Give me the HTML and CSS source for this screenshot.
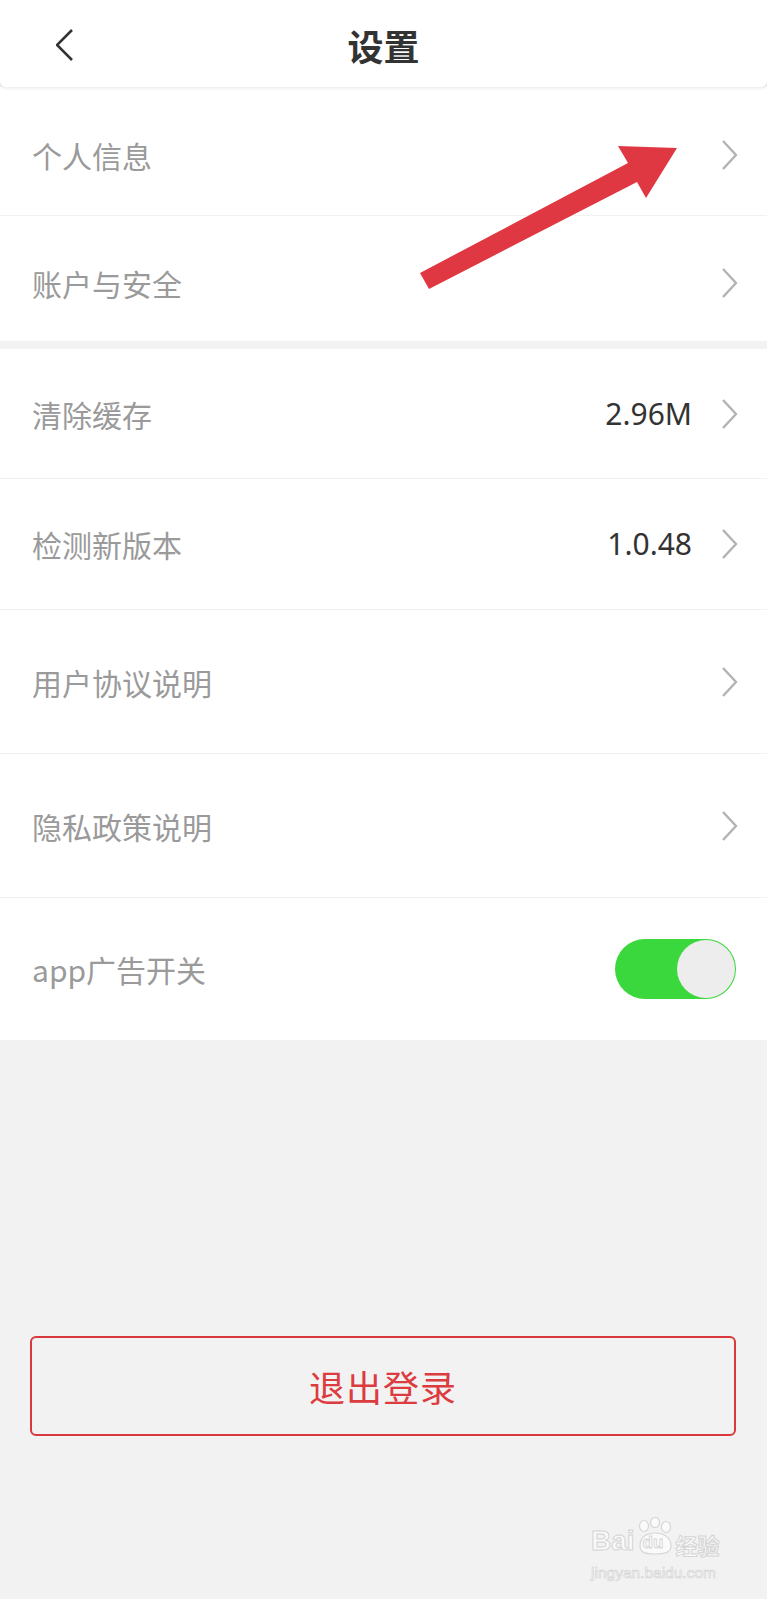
FILE: index.html
```html
<!DOCTYPE html>
<html lang="zh-CN">
<head>
<meta charset="utf-8">
<title>设置</title>
<link rel="stylesheet" href="styles.css">
</head>
<body>
<div class="page">
  <header class="header">
    <div class="back">
      <svg width="20" height="34" viewBox="0 0 20 34"><polyline points="16,2 1,17 16,32" fill="none" stroke="#333" stroke-width="2.6" stroke-linejoin="miter"/></svg>
    </div>
    <h1 class="title">设置</h1>
    <div></div>
  </header>

  <section class="group first">
    <div class="row h129 line"><span class="label">个人信息</span><span class="right"><svg class="chev" width="18" height="32" viewBox="0 0 18 32"><polyline points="2,2 15,16 2,30" fill="none" stroke="#b3b3b3" stroke-width="2.4"/></svg></span></div>
    <div class="row h125"><span class="label">账户与安全</span><span class="right"><svg class="chev" width="18" height="32" viewBox="0 0 18 32"><polyline points="2,2 15,16 2,30" fill="none" stroke="#b3b3b3" stroke-width="2.4"/></svg></span></div>
  </section>

  <section class="group second">
    <div class="row h130 line"><span class="label">清除缓存</span><span class="right"><span class="value">2.96M</span><svg class="chev" width="18" height="32" viewBox="0 0 18 32"><polyline points="2,2 15,16 2,30" fill="none" stroke="#b3b3b3" stroke-width="2.4"/></svg></span></div>
    <div class="row h131 line"><span class="label">检测新版本</span><span class="right"><span class="value">1.0.48</span><svg class="chev" width="18" height="32" viewBox="0 0 18 32"><polyline points="2,2 15,16 2,30" fill="none" stroke="#b3b3b3" stroke-width="2.4"/></svg></span></div>
    <div class="row h144 line"><span class="label">用户协议说明</span><span class="right"><svg class="chev" width="18" height="32" viewBox="0 0 18 32"><polyline points="2,2 15,16 2,30" fill="none" stroke="#b3b3b3" stroke-width="2.4"/></svg></span></div>
    <div class="row h144 line"><span class="label">隐私政策说明</span><span class="right"><svg class="chev" width="18" height="32" viewBox="0 0 18 32"><polyline points="2,2 15,16 2,30" fill="none" stroke="#b3b3b3" stroke-width="2.4"/></svg></span></div>
    <div class="row h142"><span class="label">app广告开关</span><span class="right"><span class="toggle"><span class="knob"></span></span></span></div>
  </section>

  <div class="logout-wrap">
    <button class="logout">退出登录</button>
  </div>

  <svg class="arrow" width="767" height="320" viewBox="0 0 767 320">
    <polygon points="420,273 628,163 618,146 677,148 646,198 637,182 429,289" fill="#e03842"/>
  </svg>

  <div class="watermark">
    <div class="wm-top"><span class="bai">Bai</span><span class="paw"><svg width="40" height="38" viewBox="0 0 40 38"><g fill="#fafafa" stroke="#d6d6d6" stroke-width="1.2"><ellipse cx="9" cy="9" rx="4.5" ry="5.5"/><ellipse cx="20" cy="5.5" rx="4.5" ry="5"/><ellipse cx="31" cy="10" rx="4.5" ry="5.5"/><path d="M5 29 C5 19 13 16 20 16 C28 16 36 20 36 29 C36 36 29 37 20 37 C11 37 5 36 5 29 Z"/></g></svg><span class="du">du</span></span><span class="jy">经验</span></div>
    <div class="wm-bottom">jingyan.baidu.com</div>
  </div>
</div>
</body>
</html>
```

FILE: styles.css
```css
* { box-sizing: border-box; }
html, body { margin: 0; padding: 0; }
body {
  background: #f2f2f2;
  font-family: "Noto Sans CJK SC", "Noto Sans", sans-serif;
}
.page {
  position: relative;
  width: 767px;
  min-height: 1599px;
  background: #f2f2f2;
}
.header {
  position: relative;
  z-index: 2;
  height: 87px;
  background: #fff;
  display: grid;
  grid-template-columns: 1fr auto 1fr;
  align-items: center;
  box-shadow: 0 2px 3px rgba(0,0,0,0.07);
  border-radius: 0 0 6px 6px;
}
.back {
  padding-left: 56px;
  display: flex;
  align-items: center;
  padding-top: 2px;
}
.title {
  margin: 0;
  font-size: 36px;
  font-weight: 700;
  color: #333;
  line-height: 1;
  padding-top: 2px;
}
.group {
  background: #fff;
  position: relative;
}
.group.second { margin-top: 8px; }
.row {
  display: flex;
  align-items: center;
  justify-content: space-between;
  padding: 0 30px 0 32px;
  position: relative;
}
.group.first .row { padding-top: 8px; }
.row.line { border-bottom: 1px solid #f1f1f1; }
.h125 { height: 125px; }
.h129 { height: 129px; }
.h130 { height: 130px; }
.h131 { height: 131px; }
.h142 { height: 142px; }
.h144 { height: 144px; }
.label {
  font-size: 30px;
  color: #9a9a9a;
  line-height: 1;
}
.right {
  display: flex;
  align-items: center;
}
.value {
  font-family: "Noto Sans", "Open Sans", sans-serif;
  font-size: 30px;
  color: #333;
  margin-right: 29px;
  line-height: 1;
}
.chev { display: block; margin-right: -2px; }
.toggle {
  width: 121px;
  height: 60px;
  border-radius: 30px;
  background: #3ad83c;
  display: flex;
  justify-content: flex-end;
  align-items: center;
  padding: 1px;
  margin-right: 1px;
}
.knob {
  width: 58px;
  height: 58px;
  border-radius: 50%;
  background: #ededed;
}
.logout-wrap {
  padding: 296px 31px 0 30px;
}
.logout {
  display: block;
  width: 100%;
  height: 100px;
  background: #f2f2f2;
  border: 2px solid #d9383c;
  border-radius: 6px;
  color: #dc3b3f;
  font-family: "Noto Sans CJK SC", sans-serif;
  font-size: 36px;
  letter-spacing: 1px;
  padding: 0;
}
.arrow {
  position: absolute;
  left: 0;
  top: 0;
  z-index: 3;
}
.watermark {
  position: absolute;
  left: 591px;
  top: 1514px;
  color: #fafafa;
  -webkit-text-stroke: 1px #d4d4d4;
  font-family: "Liberation Sans", sans-serif;
}
.wm-top {
  display: flex;
  align-items: flex-end;
  line-height: 1;
  height: 42px;
}
.bai {
  font-size: 28px;
  font-weight: 700;
  margin-bottom: 1px;
}
.jy {
  font-family: "Noto Sans CJK SC", sans-serif;
  font-size: 22px;
  font-weight: 700;
  margin-left: 1px;
  margin-bottom: 1px;
}
.paw {
  position: relative;
  width: 40px;
  height: 42px;
  display: inline-block;
}
.paw svg { position: absolute; left: 0; top: 3px; }
.paw .du {
  position: absolute;
  left: 8px;
  top: 20px;
  font-size: 17px;
  font-weight: 700;
  -webkit-text-stroke: 0.8px #d4d4d4;
}
.wm-bottom {
  font-size: 15.5px;
  margin-top: 8px;
  -webkit-text-stroke: 0.7px #d4d4d4;
}
```
